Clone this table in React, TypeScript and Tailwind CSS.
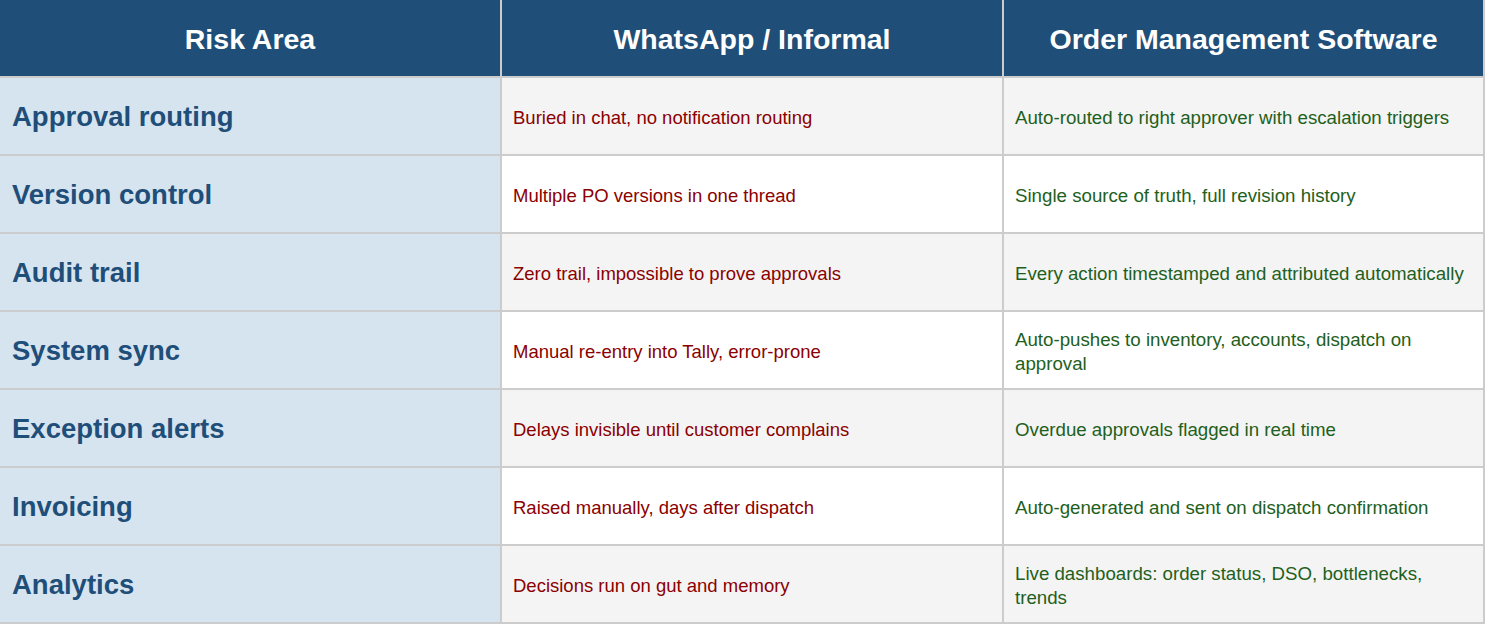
import React from 'react';

type Row = {
  area: string;
  informal: string;
  software: string;
};

const rows: Row[] = [
  {
    area: 'Approval routing',
    informal: 'Buried in chat, no notification routing',
    software: 'Auto-routed to right approver with escalation triggers',
  },
  {
    area: 'Version control',
    informal: 'Multiple PO versions in one thread',
    software: 'Single source of truth, full revision history',
  },
  {
    area: 'Audit trail',
    informal: 'Zero trail, impossible to prove approvals',
    software: 'Every action timestamped and attributed automatically',
  },
  {
    area: 'System sync',
    informal: 'Manual re-entry into Tally, error-prone',
    software: 'Auto-pushes to inventory, accounts, dispatch on approval',
  },
  {
    area: 'Exception alerts',
    informal: 'Delays invisible until customer complains',
    software: 'Overdue approvals flagged in real time',
  },
  {
    area: 'Invoicing',
    informal: 'Raised manually, days after dispatch',
    software: 'Auto-generated and sent on dispatch confirmation',
  },
  {
    area: 'Analytics',
    informal: 'Decisions run on gut and memory',
    software: 'Live dashboards: order status, DSO, bottlenecks, trends',
  },
];

const App = () => {
  return (
    <div className="w-[1485px] bg-white font-['Liberation_Sans',Arial,sans-serif]">
      <div className="grid grid-cols-[502px_502px_481px]">
        {/* Header */}
        <div className="h-[78px] flex items-center justify-center bg-[#1f4e79] border-r-2 border-b-2 border-[#cccccc] pt-[2px]">
          <span className="text-white font-bold text-[28.5px] leading-none">Risk Area</span>
        </div>
        <div className="h-[78px] flex items-center justify-center bg-[#1f4e79] border-r-2 border-b-2 border-[#cccccc] pt-[2px]">
          <span className="text-white font-bold text-[28.5px] leading-none">WhatsApp / Informal</span>
        </div>
        <div className="h-[78px] flex items-center justify-center bg-[#1f4e79] border-r-2 border-b-2 border-[#cccccc] pt-[2px]">
          <span className="text-white font-bold text-[28.5px] leading-none">Order Management Software</span>
        </div>

        {/* Body rows */}
        {rows.map((row, i) => (
          <React.Fragment key={row.area}>
            <div className="h-[78px] flex items-center px-3 pt-[2px] bg-[#d6e4f0] border-r-2 border-b-2 border-[#cccccc]">
              <span className="text-[#1f4e79] font-bold text-[27.5px] leading-none">{row.area}</span>
            </div>
            <div className={`h-[78px] flex items-center pl-[11px] pr-3 pt-[3px] border-r-2 border-b-2 border-[#cccccc] ${i % 2 === 0 ? 'bg-[#f4f4f4]' : 'bg-white'}`}>
              <span className="text-[#8b0000] text-[18.5px] leading-6">{row.informal}</span>
            </div>
            <div className={`h-[78px] flex items-center pl-[11px] pr-3 pt-[3px] border-r-2 border-b-2 border-[#cccccc] ${i % 2 === 0 ? 'bg-[#f4f4f4]' : 'bg-white'}`}>
              <span className="text-[#1e6020] text-[18.7px] leading-6">{row.software}</span>
            </div>
          </React.Fragment>
        ))}
      </div>
    </div>
  );
};

export default App;
